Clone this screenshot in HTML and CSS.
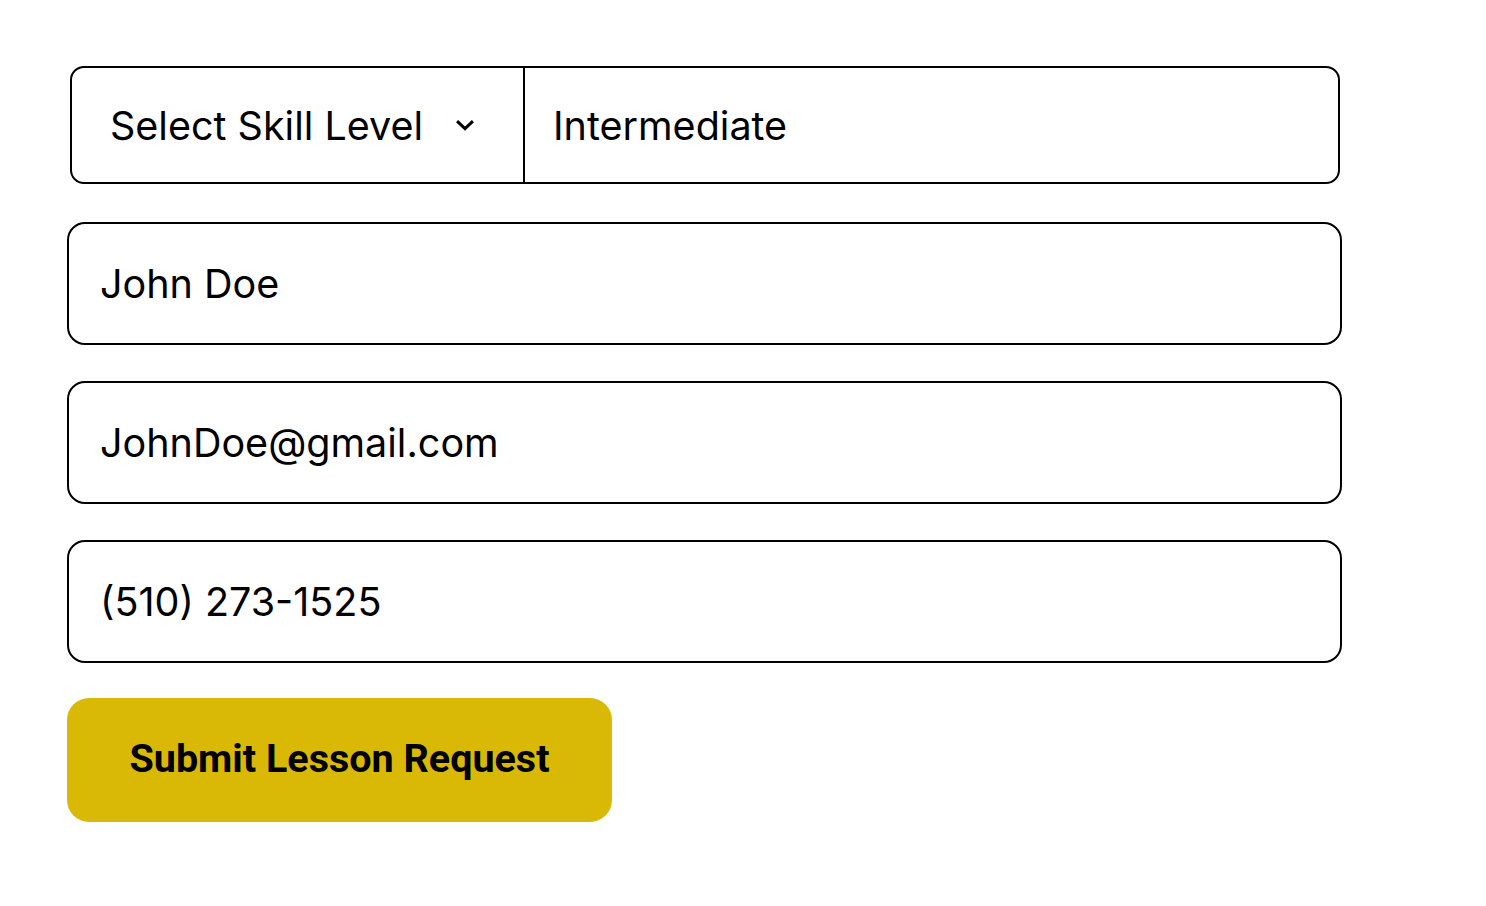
FILE: index.html
```html
<!DOCTYPE html>
<html lang="en">
<head>
<meta charset="utf-8">
<title>Lesson Request</title>
<link rel="stylesheet" href="styles.css">
</head>
<body>
<form class="lesson-form">
  <div class="skill-group">
    <div class="skill-select">
      <span class="skill-label">Select Skill Level</span>
      <svg class="chevron" width="18" height="11" viewBox="0 0 18 11" aria-hidden="true">
        <path d="M2.2 2.2 L9 8.6 L15.8 2.2" fill="none" stroke="#000" stroke-width="3" stroke-linecap="square" stroke-linejoin="miter"/>
      </svg>
    </div>
    <div class="skill-value">Intermediate</div>
  </div>
  <div class="field">John Doe</div>
  <div class="field">JohnDoe@gmail.com</div>
  <div class="field">(510) 273-1525</div>
  <button type="button" class="submit-btn">Submit Lesson Request</button>
</form>
</body>
</html>
```

FILE: styles.css
```css
html, body {
  margin: 0;
  padding: 0;
  background: #ffffff;
}

body {
  font-family: "Inter", "Liberation Sans", sans-serif;
  color: #000;
}

.lesson-form {
  display: flex;
  flex-direction: column;
  gap: 36px;
  width: 1275px;
  padding: 66px 0 0 67px;
}

.skill-group {
  display: flex;
  height: 118px;
  box-sizing: border-box;
  margin: 0 2px 2px 3px;
  border: 2px solid #000;
  border-radius: 14px;
}

.skill-select {
  display: flex;
  align-items: center;
  gap: 33px;
  box-sizing: border-box;
  width: 453px;
  padding-left: 38px;
  border-right: 2px solid #000;
}

.skill-label,
.skill-value,
.field {
  font-size: 39.5px;
  line-height: 1;
  letter-spacing: 0;
}

.skill-label,
.skill-value {
  padding-top: 3px;
}

.chevron {
  display: block;
}

.skill-value {
  display: flex;
  align-items: center;
  padding-left: 28px;
}

.field {
  display: flex;
  align-items: center;
  box-sizing: border-box;
  height: 123px;
  padding-left: 31px;
  padding-top: 3px;
  border: 2px solid #000;
  border-radius: 18px;
}

.submit-btn {
  width: 545px;
  height: 124px;
  margin-top: -1px;
  border: none;
  border-radius: 22px;
  background: #d9b906;
  font-family: "Roboto", "Liberation Sans", sans-serif;
  font-weight: 700;
  font-size: 39.5px;
  color: #000;
  padding: 0 0 3px 0;
  cursor: pointer;
}
```
